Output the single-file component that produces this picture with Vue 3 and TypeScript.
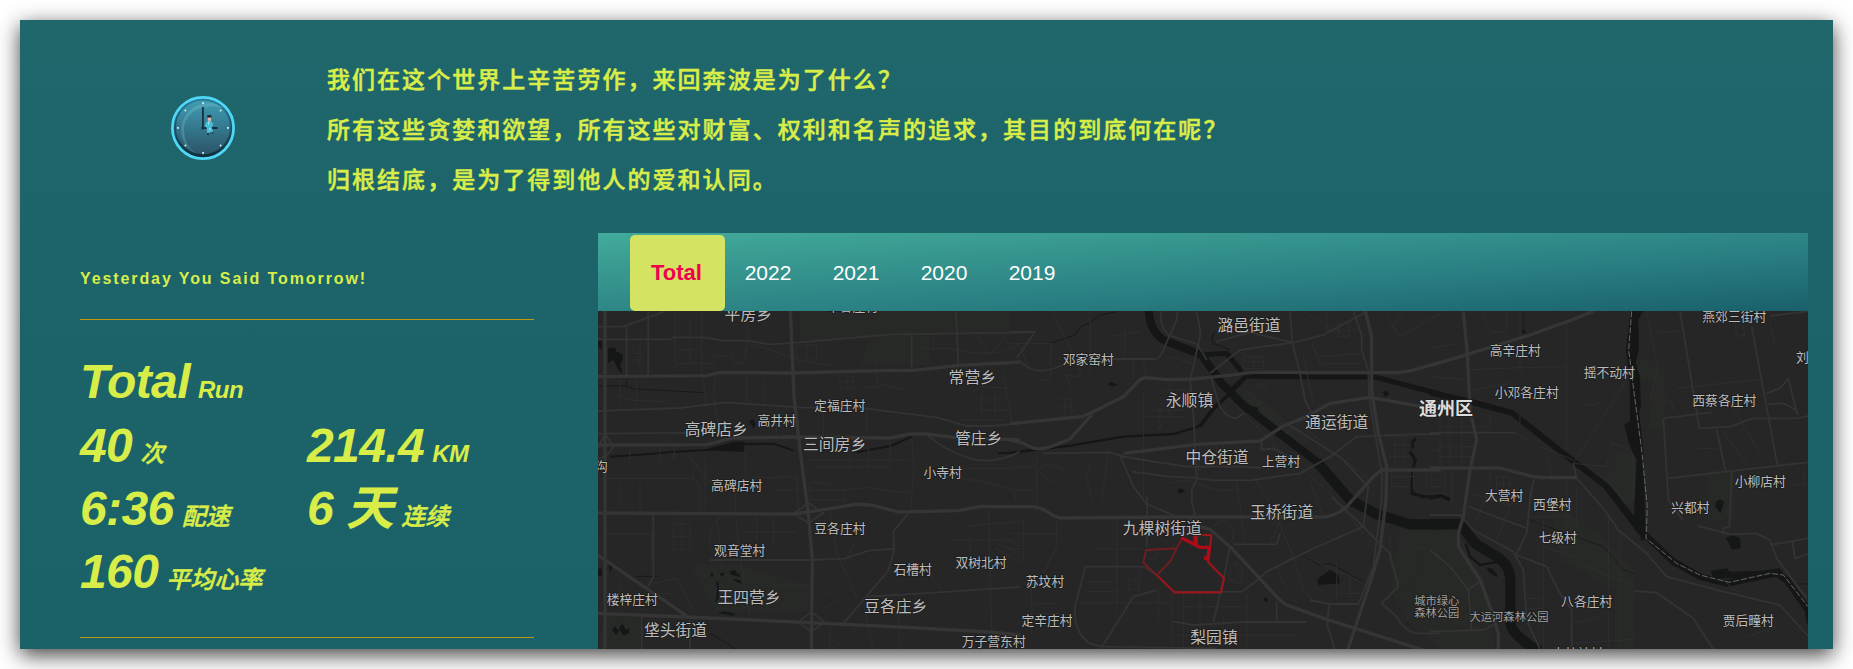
<script setup lang="ts">
import { ref } from 'vue'

interface Stat { value: string; unit: string; wide?: boolean }
interface Label { t: string; x: number; y: number; k: string }
interface Sheet { x: number; major: string[]; medium: string[]; minor: string[] }

const quotes: string[] = [
  '我们在这个世界上辛苦劳作，来回奔波是为了什么？',
  '所有这些贪婪和欲望，所有这些对财富、权利和名声的追求，其目的到底何在呢？',
  '归根结底，是为了得到他人的爱和认同。',
]

const stats: Stat[] = [
  { value: 'Total', unit: 'Run', wide: true },
  { value: '40', unit: '次' },
  { value: '214.4', unit: 'KM' },
  { value: '6:36', unit: '配速' },
  { value: '6 天', unit: '连续' },
  { value: '160', unit: '平均心率', wide: true },
]

const tabs: string[] = ['Total', '2022', '2021', '2020', '2019']
const active = ref<string>('Total')

// Label centres in map space; k: t = town, v = village, p = park, d = district
const labels: Label[] = [
  { t: '平房乡', x: 748.3, y: 314.8, k: 't' },
  { t: '草各庄村', x: 852.5, y: 306.2, k: 'v' },
  { t: '常营乡', x: 972.3, y: 377.7, k: 't' },
  { t: '定福庄村', x: 839.7, y: 406, k: 'v' },
  { t: '高井村', x: 776.7, y: 420.7, k: 'v' },
  { t: '高碑店乡', x: 716.3, y: 429.3, k: 't' },
  { t: '三间房乡', x: 834.6, y: 444.7, k: 't' },
  { t: '管庄乡', x: 978.7, y: 438.3, k: 't' },
  { t: '沟', x: 601.5, y: 467, k: 'v' },
  { t: '小寺村', x: 942.7, y: 472.7, k: 'v' },
  { t: '高碑店村', x: 736.7, y: 485.7, k: 'v' },
  { t: '豆各庄村', x: 839.9, y: 529, k: 'v' },
  { t: '观音堂村', x: 739.7, y: 550.3, k: 'v' },
  { t: '石槽村', x: 912.7, y: 569.7, k: 'v' },
  { t: '双树北村', x: 981, y: 562.3, k: 'v' },
  { t: '王四营乡', x: 749, y: 597.7, k: 't' },
  { t: '豆各庄乡', x: 895.7, y: 607, k: 't' },
  { t: '楼梓庄村', x: 632.3, y: 599.3, k: 'v' },
  { t: '垡头街道', x: 675.5, y: 630.3, k: 't' },
  { t: '万子营东村', x: 993.7, y: 642, k: 'v' },
  { t: '邓家窑村', x: 1088.3, y: 359.7, k: 'v' },
  { t: '潞邑街道', x: 1249, y: 325.3, k: 't' },
  { t: '永顺镇', x: 1189.5, y: 401, k: 't' },
  { t: '通运街道', x: 1336.7, y: 422.9, k: 't' },
  { t: '中仓街道', x: 1217, y: 457.9, k: 't' },
  { t: '上营村', x: 1281, y: 461.5, k: 'v' },
  { t: '玉桥街道', x: 1281.6, y: 512.3, k: 't' },
  { t: '九棵树街道', x: 1162.3, y: 528.7, k: 't' },
  { t: '苏坟村', x: 1045, y: 581.8, k: 'v' },
  { t: '定辛庄村', x: 1047, y: 620.2, k: 'v' },
  { t: '梨园镇', x: 1214, y: 638, k: 't' },
  { t: '通州区', x: 1446, y: 409.3, k: 'd' },
  { t: '城市绿心', x: 1436.8, y: 601, k: 'p' },
  { t: '森林公园', x: 1436.8, y: 613.5, k: 'p' },
  { t: '高辛庄村', x: 1515.3, y: 350.5, k: 'v' },
  { t: '小邓各庄村', x: 1526.7, y: 392.7, k: 'v' },
  { t: '摇不动村', x: 1609.3, y: 372.7, k: 'v' },
  { t: '燕郊三街村', x: 1734.3, y: 317, k: 'v' },
  { t: '刘', x: 1802.4, y: 357.3, k: 'v' },
  { t: '西蔡各庄村', x: 1724.3, y: 400.3, k: 'v' },
  { t: '大营村', x: 1504.2, y: 495.7, k: 'v' },
  { t: '西堡村', x: 1552.3, y: 504.7, k: 'v' },
  { t: '七级村', x: 1557.7, y: 537.3, k: 'v' },
  { t: '小柳店村', x: 1760.3, y: 482, k: 'v' },
  { t: '兴都村', x: 1690.3, y: 507.7, k: 'v' },
  { t: '八各庄村', x: 1586.7, y: 601.7, k: 'v' },
  { t: '大运河森林公园', x: 1509, y: 617, k: 'p' },
  { t: '贾后疃村', x: 1748.3, y: 621, k: 'v' },
  { t: '大杜社村', x: 1577.5, y: 654, k: 'v' },
]

// Each sheet stores its roads on a local grid of three units per map unit
const sheets: Sheet[] = [
  {
    x: 590,
    major: [
      'M45 30V1050', 'M24 230L350 227L390 217L610 219L900 211L970 211L1110 196L1290 186',
      'M601 30L612 290L630 450L655 640L667 780L664 1050', 'M24 435L350 434L430 414L610 411L900 414L960 402L1010 402L1090 412L1290 420',
      'M24 639L610 642L720 626L800 612L850 616L925 636L1105 632L1170 620L1290 620', 'M24 940L290 951L640 967L930 981L1200 996L1290 1005',
      'M24 766L290 948',
    ],
    medium: [
      'M24 80L100 80L225 34', 'M24 333L270 324L410 307L620 322L830 326L1040 352L1130 378L1205 378L1290 370',
      'M620 128L905 103L1290 98', 'M24 118H245M175 35V228M110 80V228', 'M24 401L330 398', 'M245 112L340 112L400 122H470L540 133L620 128',
      'M190 642V830L170 868', 'M965 103V206', 'M1098 34L1105 190', 'M953 642L910 695L912 752L895 812L760 970', 'M360 780H660L765 776L835 752L912 746', 'M835 890L1000 880L1290 861',
      'M1010 404Q1070 455 1140 475T1290 455', 'M610 642L655 608L700 640L655 668L610 642', 'M625 967L664 935L705 967L664 995Z',
      'M24 445L45 400L70 440Q55 470 24 476', 'M300 960V1050M155 945V1050',
    ],
    minor: [
      'M255 34V190H370V168H428V190H460L472 130V34M255 112V150H335V35M335 150V228M335 190H300V60', 'M472 130L545 150L630 184L720 196', 'M338 228L348 310M378 225L370 290L384 370',
      'M975 145H1080L1160 160L1240 155L1290 130M1030 103V150M1160 110L1200 165L1250 105', 'M860 180V250L945 270M925 230V210M820 262L870 260', 'M965 415L972 500L962 632', 'M550 570H765V600H660V545Q690 545 720 555', 'M765 570L830 562L900 573L960 578', 'M24 535H310V500M310 535L330 555V630', 'M465 450V535L620 530L625 630', 'M434 560L440 690L465 870L480 950', 'M45 700H185V780M90 545V620M150 545V630', 'M720 640L740 760L800 890', 'M1070 505H1290M1010 520L1180 545L1270 570L1282 620', 'M1195 630L1205 990M1125 678L1290 665', 'M820 910L850 1050M925 905L930 1050M550 857H660', 'M720 980V1050L800 990M1010 810L1060 880', 'M690 860L740 900L700 930M800 720L760 790', 'M1240 220L1265 360M1140 280L1180 260L1260 265M1110 360H1250', 'M345 470V630M300 470L360 550M120 450V500M210 440V500', 'M80 285L120 300L220 305M90 240V320M140 235V315M470 230V310M520 230V315', 'M560 340V405M700 340V410M830 330V410M900 425V500M780 440V510M835 440V520M670 500H900M650 480H960', 'M400 640Q350 680 360 740L400 800M380 650L390 730', 'M250 670H300V750H250ZM275 670V750M250 710H300', 'M500 650V740M550 650V740M460 695H620', 'M130 140V160H165M120 180H165M150 120V215', 'M750 225V265H790V225M770 225V265M750 245H790M620 135H680V180H620ZM650 135V180', 'M1160 300H1250M1175 280V350M1215 280V350M1150 330H1260', 'M1080 720H1280M1140 700V770M1220 730L1290 760M1215 745L1290 785M1240 710L1290 740',
      'M253 440V480M253 460A6 6 0 1 1 252 460', 'M190 850L260 835L310 930M190 880H250M90 830V900',
    ],
  },
  {
    x: 1010,
    major: [
      'M0 371L215 350L250 335L340 290L390 239L405 233L475 239L550 237L620 230L730 217L1160 218L1200 213L1290 187', 'M0 420Q35 425 60 440T130 437L180 417L245 345', 'M0 620H70Q95 622 130 647L150 654L480 651H940Q980 648 1010 620L1090 530L1115 510H1290',
      'M570 680L600 688L660 740L800 890L825 913L950 958L1240 1050', 'M1065 30L1085 110V270L1105 400L1130 500L1128 600L1110 750L1080 850L1013 1050', 'M340 460L560 433L750 423L820 378L890 350L960 310L1080 292L1220 317L1290 325',
    ],
    medium: [
      'M0 185L30 185Q60 212 90 212T160 195L215 177H430Q450 180 462 145L500 60L503 34', 'M1030 34L1055 105V150L1075 210L1077 290L1100 430L1116 520L1115 600L1090 800L1045 912H957L952 975L975 1050', 'M560 34L572 100L550 200L540 240L550 340L560 540L545 570V605L555 640L540 660', 'M330 465L370 560L410 612L500 650', 'M100 460L300 457L340 470L400 480L530 500H700L755 505', 'M365 515L480 530L550 533L610 541H720L870 520L960 470L1040 410L1200 403L1290 402', 'M755 420V450L790 445L870 490', 'M455 34Q445 75 475 105L560 132Q580 160 590 180', 'M620 125L720 97L850 128L940 105L1065 38', 'M840 34L847 128L870 220L885 300L910 350', 'M600 225L630 320Q650 355 680 355L700 340', 'M411 590V690L410 740', 'M0 96H75L20 175', 'M440 870L370 890L270 1050', 'M227 800H400L440 825', 'M227 798L195 920Q190 1000 240 1030L275 1040L620 1045', 'M490 875H695L730 850L770 815L900 750L1060 680L1075 560L1000 480L940 440L830 370', 'M660 740L640 840L610 965', 'M957 912L900 900', 'M670 733H800L810 700', 'M490 965L550 975L700 966H890', 'M1290 1000H1215Q1180 990 1160 950L1115 910L1165 860L1140 760L1060 680L965 590', 'M600 220L690 150L760 140L850 128', 'M800 905V960',
    ],
    minor: [
      'M128 34L215 220L200 230L165 225L190 270M240 34V220', 'M0 130H125L120 240H90M30 140L60 212', 'M400 180L410 240M345 80V170M300 110L390 95M370 180V240M480 170L545 190', 'M400 280V590M480 240V350L440 390M455 270H540M420 330H530M410 350H530M450 320V390', 'M620 440V500H750M570 433L565 540M640 430V480M580 470H700', 'M750 250L720 280L830 400L940 310L1000 380M750 250L800 310', 'M680 320L800 440L960 580L1060 700', 'M890 390L1030 500L1100 560', 'M740 540L800 650L850 770L880 870L910 900', 'M680 545L705 730M900 545L940 650M850 770L800 800L830 870M820 640L780 730', 'M890 40L1010 110M880 170L910 310M905 130L935 200M950 40V90H1050M985 70H1015V110H985Z', 'M1180 34L1140 90M1130 50L1170 110L1290 40M940 190H1060', 'M700 170H760V205H700ZM730 165V205M700 185H760', 'M250 747H400M227 845H320V655M227 875H320M320 750V940M210 908H485M390 800V890M355 840H385V870H355Z', 'M485 875V1045M445 870V960M520 880V1045M570 880V1045M640 950V1040M710 880V1045M520 920H720M490 1005H870M600 1010V1045', 'M240 490L230 530L245 600M295 460L275 600M0 500H80V570H0M80 470V640M85 510Q110 480 160 510L120 550Z', 'M150 700H0M140 660V740L100 820M65 830V1000M40 660V790M0 660H40M0 745H40M70 910H150M80 940H150V1000M145 295H185V345M145 320H185M165 290V350', 'M1125 410H1210M1130 435H1205M1135 470H1200M1145 510V560H1200M1155 410V500M1180 415V500M1150 530H1210M1210 500V570M1250 520V570', 'M1140 700V790L1170 850M1225 745Q1260 745 1290 770M1230 760L1210 840L1170 890L1195 970', 'M660 800Q680 770 700 810L690 850L660 840Z M670 790L700 830M590 705V740', 'M415 750H440V775L415 780', 'M890 770L950 800L1000 820L1060 850M980 790V900M1020 820V910M970 880H1060', 'M480 550L530 540L560 550L620 570H700', 'M610 680L640 660L670 690L665 730', 'M930 170L1060 160',
    ],
  },
  {
    x: 1430,
    major: [
      'M0 197L110 164L300 105L420 62L490 34', 'M100 34L112 160L120 330L140 420L120 510L100 650L85 700V740L150 840L180 920L205 1000V1050', 'M0 504H210L310 530L345 533H440',
    ],
    medium: [
      'M0 398H258', 'M313 530L300 600L290 700L258 765', 'M430 490L440 535L520 625L565 690L650 760L710 830L880 875L1050 915L1134 1008', 'M0 645H90L130 690L250 755L280 810L290 960L330 1048', 'M115 620L290 685', 'M700 355L845 337M805 385L900 380L970 355H1100L1134 348', 'M750 34L808 385M965 80L1043 500M860 388L887 515M700 355L715 600L760 662', 'M712 535L890 515L1134 487', 'M905 515L898 680L880 685V700M805 678L900 703L980 700L1020 720L1040 775L1130 895', 'M1010 280L1050 265L1075 235L1102 345M1015 313L1060 310L1100 330', 'M0 995L160 990L190 975M0 750L60 800L115 870L125 990M115 870L150 843', 'M260 765L350 800L390 880L425 930V1048', 'M612 873L680 878L790 955L850 1048', 'M1020 735L1134 715M1087 725L1095 775L1134 762', 'M1020 48L1134 34',
    ],
    minor: [
      'M155 34L180 95H230V34M0 145L80 130M270 34V500M410 60V450M120 210L210 205L410 200M130 270L240 250M0 230L120 240', 'M650 34L683 200L660 300H720L735 330M683 98L750 93M740 265L990 238M885 280L990 460M880 395L955 500', 'M590 240L430 490', 'M430 490L530 500L545 430Q610 440 610 480V600Q590 625 575 590L530 540L480 500', 'M30 350V500M60 340V500M95 350V500M30 380H180V340M30 440H130M30 470H130', 'M180 510V560L140 660M120 580L220 610L265 560M200 540L240 620L200 720', 'M0 515H45V580H0M65 510V610M0 540H40M0 560H40', 'M300 550V640M350 465L370 540M330 440L430 480M410 540V770M440 560V690M300 650L430 650', 'M535 650V1048M570 690V1048M290 895H335M290 925H340M430 970L510 950M430 1030L615 1018', 'M340 660V1048M615 720V1048', 'M340 740L430 770L470 800L615 860', 'M1020 70L1035 135M915 65L920 110L945 105L935 60M800 445H860M450 315H490L520 305', 'M950 1010L1040 980M880 840L925 880M1120 500L1125 555L1080 555', 'M0 450L40 450M260 400L305 425', 'M200 530H240V570H200ZM220 530V570M200 550H240M190 580Q220 640 260 600',
    ],
  },
]
</script>

<template>
  <main class="page">
    <header class="hero">
      <svg class="clock" viewBox="0 0 64 64" aria-label="clock">
        <defs>
          <linearGradient id="face" x1="0" y1="0" x2="0" y2="1">
            <stop offset="0" stop-color="#3f9db5" />
            <stop offset="1" stop-color="#2b5468" />
          </linearGradient>
          <linearGradient id="rim" x1="0" y1="0" x2="0" y2="1">
            <stop offset="0" stop-color="#287d98" />
            <stop offset="1" stop-color="#102b37" />
          </linearGradient>
        </defs>
        <circle cx="32" cy="32" r="30.6" fill="url(#rim)" stroke="#50d6f6" stroke-width="2.8" />
        <circle cx="32" cy="31.4" r="27" fill="url(#face)" />
        <path d="M53 12A27 27 0 1 0 25 58Q13 49 13 34C13 18 29 6 53 12Z" fill="#83c5d1" opacity=".3" />
        <g fill="#d6edf0">
          <rect x="31.2" y="6.2" width="1.8" height="1.8" />
          <rect x="31.2" y="56" width="1.8" height="1.8" />
          <rect x="6" y="31" width="1.8" height="1.8" />
          <rect x="56" y="31" width="1.8" height="1.8" />
          <circle cx="14.4" cy="14.5" r="1" />
          <circle cx="49.6" cy="14.5" r="1" />
          <circle cx="14.4" cy="49.6" r="1" />
          <circle cx="49.6" cy="49.6" r="1" />
        </g>
        <path d="M31.9 11V32H46.5" fill="none" stroke="#17303f" stroke-width="1.8" />
        <circle cx="31.8" cy="32" r="1.6" fill="#17303f" />
        <path d="M35.5 25.4L40.4 25L42.4 29L40.6 31L42.4 36.5H40.2L38.7 32.6L38.2 37.5H36.3L35.6 31.5L33.5 30.5Z" fill="#43bfd8" />
        <path d="M38 25.2L37.5 28.5M38.8 32L39 36" stroke="#e6f5f4" stroke-width=".8" />
        <path d="M36.8 21.2H40V24.4L38.4 25.4L36.8 24.3Z" fill="#e6b6ae" />
        <path d="M36 19.7Q38.2 18.2 40.8 19.6L40.2 21.5H36.5Z" fill="#142436" />
        <path d="M36.2 37.2H38V38.8H35.7ZM40.5 36.2H42.2L42.8 37.4H40.7Z" fill="#142436" />
      </svg>
      <div class="quotes">
        <p v-for="q in quotes" :key="q">{{ q }}</p>
      </div>
    </header>

    <div class="body">
      <aside class="side">
        <p class="motto">Yesterday You Said Tomorrow!</p>
        <hr />
        <section class="stats">
          <div v-for="s in stats" :key="s.unit" class="stat" :class="{ wide: s.wide }">
            <span class="value">{{ s.value }}</span><span class="unit" :class="{ latin: /^[A-Z]/.test(s.unit) }">{{ s.unit }}</span>
          </div>
        </section>
        <hr />
      </aside>

      <section class="panel">
        <nav class="tabs">
          <button v-for="t in tabs" :key="t" type="button" :class="{ on: t === active }" @click="active = t">{{ t }}</button>
        </nav>
        <svg class="map" viewBox="598 311 1210 338">
          <rect x="598" y="311" width="1210" height="338" fill="#262626" />

          <g fill="#272926">
            <path d="M800 311H1010V331L850 340H800ZM690 565H740L810 585V612H715ZM605 615H640V649H598ZM870 335H930V365H860Z" />
            <path d="M1232 400L1250 390L1310 440L1300 450ZM1400 530H1455L1485 580L1495 649H1440L1405 620L1390 590Z" />
            <path d="M1613 450L1635 455V500L1622 505L1605 480ZM1550 500L1600 535L1635 570V649H1615V590L1560 560ZM1655 370H1665V430H1648ZM1708 470H1735V520H1708ZM1640 360H1655V380H1635Z" />
          </g>

          <g fill="none" stroke="#151716">
            <g transform="translate(590 300) scale(.33333)">
              <path d="M60 470L180 462L250 455L350 450L460 433L550 431L610 451M800 457L905 437L965 410M1225 460L1290 458" stroke-width="6" />
              <path d="M340 450L430 427L462 425V455Z" fill="#151716" />
              <path d="M24 258H105L130 266L340 278M110 260V235M138 829H203M360 1000L440 1048" stroke-width="2.5" />
              <path d="M54 145L75 142L80 155L98 162V180L90 195L96 210V220L85 210L70 180L54 190ZM24 122H36V148L24 140ZM478 363L490 358L498 372L490 386ZM362 820H370V830H362ZM388 820L408 818L395 830ZM418 815L436 810L440 820L450 823V832L424 824ZM428 836L450 840L455 852L440 846ZM378 846L386 844L388 895L376 907L382 870ZM382 938L405 934L438 942L425 947ZM66 990L75 978L85 992L96 970L108 990L118 985L116 1000L100 1007L90 990L78 1004ZM24 806H36V828H24ZM56 795L66 798L62 820Z" fill="#151716" stroke="none" />
            </g>
            <g transform="translate(1010 300) scale(.33333)">
              <path d="M417 30Q417 90 460 120L575 165L635 250L700 315L815 405L920 485L1020 600L1100 642L1200 673H1300" stroke-width="24" />
              <path d="M417 30Q417 90 460 120L575 165L650 160L695 215M635 250L660 275L710 228L900 231H1095L1300 285" stroke-width="15" />
              <path d="M920 485L1020 600L1100 642L1200 673H1300" stroke-width="31" />
              <path d="M660 280L610 325L565 380L490 402L340 410L180 437L0 459" stroke-width="7" />
              <path d="M570 380L610 326L655 285" stroke-width="11" />
              <path d="M120 130L195 105L210 82L240 68L270 45L320 35M885 770L930 795L960 790L1060 845" stroke-width="2.5" />
              <path d="M292 252L305 246L324 254L310 260ZM500 574L512 564L526 574L510 580ZM1118 275L1130 273L1138 283L1125 292ZM922 838L960 810L985 825L990 850L925 855ZM760 893H773V905H765ZM718 330L730 319L745 323L740 340Z" fill="#151716" stroke="none" />
              <path d="M1218 415Q1200 430 1210 445M1200 455L1216 480L1208 510L1206 580L1240 590L1290 590" stroke-width="9" />
              <path d="M615 95Q600 115 610 130L660 150M1230 760L1210 840L1170 890L1195 975" stroke-width="3" />
            </g>
            <g transform="translate(1430 300) scale(.33333)">
              <path d="M0 672H90L135 730L200 770Q240 795 241 840V970Q245 1005 330 1055" stroke-width="31" />
              <path d="M0 278L120 305L245 338L400 460L530 560L635 700" stroke-width="18" />
              <path d="M530 560L640 700L730 785L810 830L890 850L1040 820L1070 840L1134 930L1140 970" stroke-width="20" />
              <path d="M607 34L610 34L596 150L615 300L632 450L635 620L640 720" stroke-width="16" />
              <path d="M605 30L640 32L625 60L627 145L617 190L630 230L633 320L622 350L640 500L645 650L625 680L612 650L620 480L600 440L583 375L600 362L598 160ZM855 620L858 605L870 598L882 606L872 640ZM888 713L905 706L930 713L932 745L905 748ZM842 812L890 805L900 815L995 812L1048 805L1060 820L990 835H850ZM274 93L287 91L285 102ZM167 802L185 805L203 825L200 832L180 820Z" fill="#151716" stroke="none" />
              <path d="M107 730L120 770L150 795L210 785" stroke-width="7" />
              <path d="M0 595L30 585L60 600" stroke-width="10" />
              <path d="M298 660L520 740L580 810L615 822M280 34V100M270 220V480M615 720V1048M1100 852H1134" stroke-width="2" />
            </g>
          </g>

          <g v-for="s in sheets" :key="s.x" :transform="`translate(${s.x} 300) scale(.33333)`" class="roads">
            <path v-for="d in s.minor" :key="d" :d="d" class="minor" />
            <path v-for="d in s.medium" :key="d" :d="d" class="medium" />
            <path v-for="d in s.major" :key="d" :d="d" class="major" />
          </g>

          <path
            transform="translate(1430 300) scale(.33333)"
            d="M605 34L596 150L615 300L635 450L652 620L648 715L740 790L810 825L898 847L1020 820L1060 825L1134 920"
            class="border"
          />

          <g transform="translate(1010 300) scale(.33333)" class="track">
            <path d="M516 715L500 745L480 785L440 825L400 788L408 750L497 745" stroke="#8b1b20" stroke-width="6" opacity=".72" />
            <path d="M440 825L493 877H633L642 835L595 787L600 742L604 705H555" stroke="#98161c" stroke-width="6.5" />
            <path d="M514 713L570 742H598L592 782M596 774H582" stroke="#ad0b18" stroke-width="10" />
            <path d="M557 704V735" stroke="#ad0b18" stroke-width="13" />
          </g>

          <g class="labels">
            <text v-for="l in labels" :key="l.t" :x="l.x" :y="l.y" :class="l.k" dy=".34em">{{ l.t }}</text>
          </g>
        </svg>
      </section>
    </div>
  </main>
</template>

<style>
body {
  margin: 0;
  background: #fff;
  overflow: hidden;
}
</style>

<style scoped>
.page {
  box-sizing: border-box;
  width: 1813px;
  height: 629px;
  margin: 20px;
  background: linear-gradient(#20676c, #1c646a 40%, #1a6268);
  box-shadow: 0 6px 20px rgba(0, 0, 0, 0.75);
  color: #d9ed49;
  font-family: "Liberation Sans", "Noto Sans CJK SC", sans-serif;
}
.hero {
  display: flex;
  height: 213px;
}
.clock {
  width: 64px;
  height: 64px;
  margin: 76px 92px 0 151px;
}
.quotes {
  padding-top: 33px;
}
.quotes p {
  margin: 0;
  font-size: 23px;
  line-height: 50px;
  letter-spacing: 2.04px;
  font-family: "Noto Sans CJK SC", sans-serif;
  font-weight: 500;
  -webkit-text-stroke: 0.5px #d9ed49;
  white-space: nowrap;
}
.body {
  display: flex;
}
.side {
  width: 454px;
  margin: 0 64px 0 60px;
}
.motto {
  margin: 33px 0 28px;
  font-size: 16px;
  line-height: 25px;
  font-weight: 700;
  letter-spacing: 1.9px;
}
hr {
  height: 1px;
  margin: 0;
  border: 0;
  background: #c09a0e;
}
.stats {
  display: grid;
  grid-template-columns: 227px 227px;
  grid-template-rows: 64px 63px 63px 63px;
  padding: 30px 0 34px;
  font-style: italic;
  font-weight: 700;
}
.stat {
  line-height: 63px;
  white-space: nowrap;
}
.wide {
  grid-column: span 2;
}
.value {
  font-size: 48px;
  letter-spacing: -0.6px;
}
.unit {
  margin-left: 8px;
  font-size: 24px;
  font-weight: 500;
  -webkit-text-stroke: 0.5px #d9ed49;
}
.unit.latin {
  font-weight: 700;
  letter-spacing: -0.4px;
  -webkit-text-stroke: 0;
}
.panel {
  width: 1210px;
}
.tabs {
  display: flex;
  box-sizing: border-box;
  height: 78px;
  padding: 2px 0 0 32px;
  background: linear-gradient(to bottom right, #42ab9b, #287c80 65%, #19606b);
}
.tabs button {
  width: 88px;
  padding: 0 2px 0 0;
  border: 0;
  border-radius: 5px;
  background: none;
  color: #fff;
  font: 21px/76px "Liberation Sans", sans-serif;
}
.tabs .on {
  width: 95px;
  background: #d4e362;
  color: #f0004f;
  font-size: 22px;
  font-weight: 700;
}
.map {
  display: block;
  width: 1210px;
  height: 338px;
}
.roads path {
  fill: none;
  stroke: #353535;
  stroke-linejoin: round;
}
.roads .major {
  stroke-width: 10;
}
.roads .medium {
  stroke-width: 5.5;
  stroke: #333;
}
.roads .minor {
  stroke-width: 3;
  stroke: #2e2e2e;
}
.border {
  fill: none;
  stroke: #666;
  stroke-width: 3;
  stroke-dasharray: 18 6;
}
.track path {
  fill: none;
  stroke-linejoin: round;
}
.labels text {
  fill: #bcbcbc;
  font-family: "Noto Sans CJK SC", sans-serif;
  text-anchor: middle;
  paint-order: stroke;
  stroke: #1c1c1c;
  stroke-width: 1.5px;
}
.labels .t {
  font-size: 15.8px;
}
.labels .v {
  font-size: 12.8px;
}
.labels .p {
  font-size: 11.3px;
  fill: #a0a0a0;
}
.labels .d {
  font-size: 18px;
  font-weight: 700;
  fill: #dcdcdc;
}
</style>
